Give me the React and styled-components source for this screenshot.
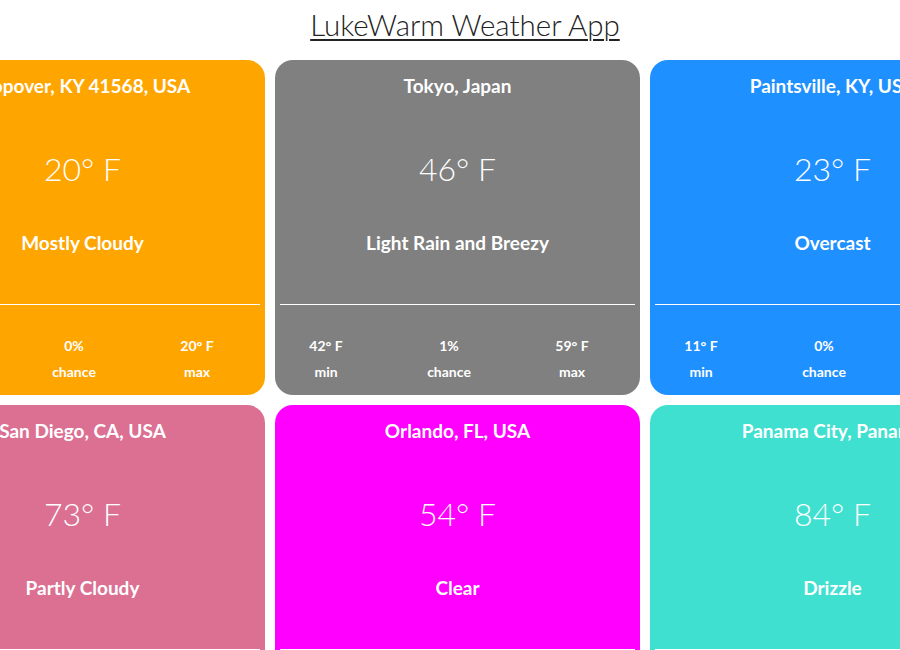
import React from "react";
import styled, { createGlobalStyle } from "styled-components";

const Global = createGlobalStyle`
  html, body { margin: 0; padding: 0; background: #fff; overflow: hidden; }
  body { font-family: Lato, "Open Sans", sans-serif; }
`;

const Page = styled.div`
  width: 900px;
  height: 650px;
  overflow: hidden;
`;

const Title = styled.h1`
  margin: 0;
  padding: 5px 0 0 30px;
  height: 60px;
  box-sizing: border-box;
  text-align: center;
  font-weight: 300;
  font-size: 29.5px;
  line-height: 40px;
  color: #222;
  text-decoration: underline;
  text-decoration-thickness: 2px;
  text-underline-offset: 3px;
`;

const Grid = styled.div`
  display: flex;
  flex-direction: column;
  gap: 10px;
  padding-left: 15px;
`;

const Row = styled.div`
  display: flex;
  justify-content: center;
  gap: 10px;
`;

const Card = styled.div`
  flex: 0 0 365px;
  width: 365px;
  height: 335px;
  border-radius: 18px;
  background: ${(p) => p.$bg};
  color: #fff;
  text-align: center;
  display: flex;
  flex-direction: column;
  padding-top: 15px;
  box-sizing: border-box;
`;

const Location = styled.div`
  font-weight: 700;
  font-size: 19px;
  line-height: 22px;
  white-space: nowrap;
`;

const Temp = styled.div`
  margin-top: 48px;
  font-weight: 300;
  font-size: 32px;
  line-height: 48px;
`;

const Condition = styled.div`
  margin-top: 39px;
  font-weight: 700;
  font-size: 19px;
  line-height: 22px;
`;

const Divider = styled.hr`
  margin: 50px 5px 0;
  border: 0;
  border-top: 1px solid #fff;
  height: 0;
`;

const Stats = styled.div`
  margin-top: 28px;
  display: grid;
  grid-template-columns: repeat(3, 123px);
  justify-content: center;
  padding-right: 17px;
  margin-left: 5px;
  margin-right: 5px;
`;

const Stat = styled.div`
  font-weight: 700;
  font-size: 14px;
  line-height: 26px;
  white-space: nowrap;
`;

const data = [
  [
    { bg: "#FFA500", loc: "Stopover, KY 41568, USA", temp: "20° F", cond: "Mostly Cloudy", min: "8° F", chance: "0%", max: "20° F" },
    { bg: "#808080", loc: "Tokyo, Japan", temp: "46° F", cond: "Light Rain and Breezy", min: "42° F", chance: "1%", max: "59° F" },
    { bg: "#1E90FF", loc: "Paintsville, KY, USA", temp: "23° F", cond: "Overcast", min: "11° F", chance: "0%", max: "36° F" },
  ],
  [
    { bg: "#DB7093", loc: "San Diego, CA, USA", temp: "73° F", cond: "Partly Cloudy", min: "60° F", chance: "0%", max: "75° F" },
    { bg: "#FF00FF", loc: "Orlando, FL, USA", temp: "54° F", cond: "Clear", min: "50° F", chance: "0%", max: "72° F" },
    { bg: "#40E0D0", loc: "Panama City, Panama", temp: "84° F", cond: "Drizzle", min: "76° F", chance: "40%", max: "88° F" },
  ],
];

function WeatherCard({ d }) {
  return (
    <Card $bg={d.bg}>
      <Location>{d.loc}</Location>
      <Temp>{d.temp}</Temp>
      <Condition>{d.cond}</Condition>
      <Divider />
      <Stats>
        <Stat>{d.min}</Stat>
        <Stat>{d.chance}</Stat>
        <Stat>{d.max}</Stat>
        <Stat>min</Stat>
        <Stat>chance</Stat>
        <Stat>max</Stat>
      </Stats>
    </Card>
  );
}

export default function App() {
  return (
    <Page>
      <Global />
      <Title>LukeWarm Weather App</Title>
      <Grid>
        {data.map((row, i) => (
          <Row key={i}>
            {row.map((d) => (
              <WeatherCard key={d.loc} d={d} />
            ))}
          </Row>
        ))}
      </Grid>
    </Page>
  );
}
